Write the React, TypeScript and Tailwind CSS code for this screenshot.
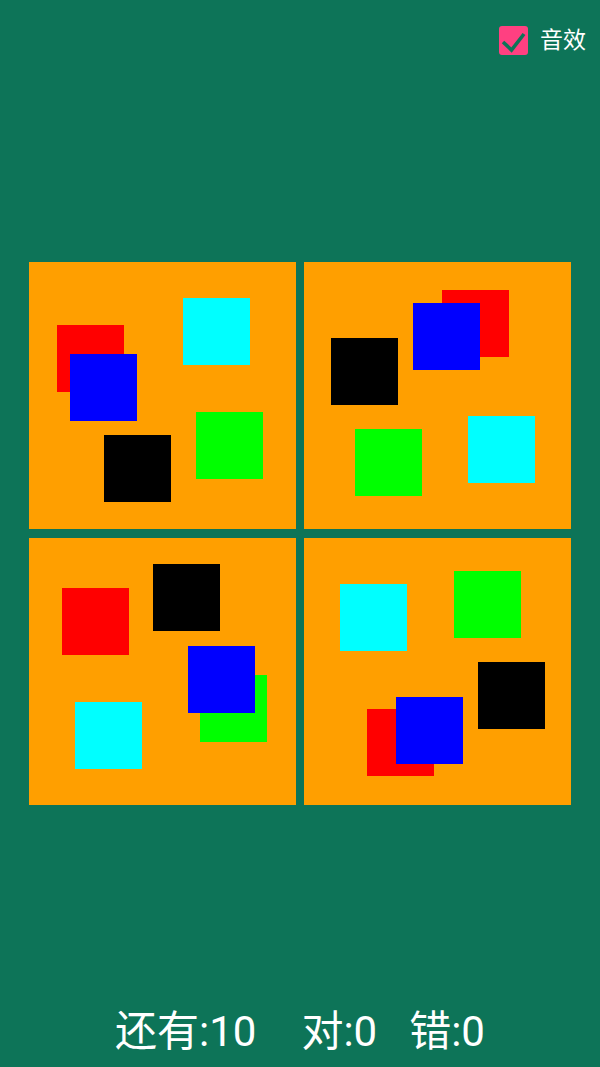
const squares: Record<string, string> = {
  red: "bg-[#ff0000]",
  blue: "bg-[#0000ff]",
  cyan: "bg-[#00ffff]",
  green: "bg-[#00ff00]",
  black: "bg-black",
};

type Sq = { c: string; x: number; y: number };

// positions in each 267px card, drawn in order (later on top)
const cards: Sq[][] = [
  [
    { c: "red", x: 28, y: 63 },
    { c: "blue", x: 41, y: 92 },
    { c: "cyan", x: 154, y: 36 },
    { c: "green", x: 167, y: 150 },
    { c: "black", x: 75, y: 173 },
  ],
  [
    { c: "red", x: 138, y: 28 },
    { c: "blue", x: 109, y: 41 },
    { c: "black", x: 27, y: 76 },
    { c: "green", x: 51, y: 167 },
    { c: "cyan", x: 164, y: 154 },
  ],
  [
    { c: "red", x: 33, y: 50 },
    { c: "black", x: 124, y: 26 },
    { c: "green", x: 171, y: 137 },
    { c: "blue", x: 159, y: 108 },
    { c: "cyan", x: 46, y: 164 },
  ],
  [
    { c: "cyan", x: 36, y: 46 },
    { c: "green", x: 150, y: 33 },
    { c: "black", x: 174, y: 124 },
    { c: "red", x: 63, y: 171 },
    { c: "blue", x: 92, y: 159 },
  ],
];

function Card({ items }: { items: Sq[] }) {
  return (
    <div className="relative w-[267px] h-[267px] bg-[#ff9f00]">
      {items.map((s, i) => (
        <div
          key={i}
          className={`absolute w-[67px] h-[67px] ${squares[s.c]}`}
          style={{ left: s.x, top: s.y }}
        />
      ))}
    </div>
  );
}

export default function App() {
  return (
    <div
      className="flex flex-col w-[600px] h-[1067px] bg-[#0d7458] text-white"
      style={{ fontFamily: '"Roboto", "Noto Sans CJK SC", sans-serif' }}
    >
      <div className="flex items-center justify-end h-[80px] pr-[14px]">
        <label className="flex items-center gap-[12px]">
          <span className="flex items-center justify-center w-[29px] h-[29px] rounded-[3px] bg-[#ff4081]">
            <svg width="29" height="29" viewBox="0 0 29 29">
              <path d="M4 16 L12.5 24 L25 8" fill="none" stroke="#0d7458" strokeWidth="3.6" />
            </svg>
          </span>
          <span className="text-[23px] leading-none">音效</span>
        </label>
      </div>

      <div className="grid grid-cols-2 gap-x-[8px] gap-y-[9px] w-[542px] mx-auto mt-[182px]">
        {cards.map((items, i) => (
          <Card key={i} items={items} />
        ))}
      </div>

      <div className="flex-1" />

      <div className="flex justify-center items-center h-[74px] pt-[4px] text-[42px] leading-none">
        <span>还有:10</span>
        <span className="ml-[45px]">对:0</span>
        <span className="ml-[32px]">错:0</span>
      </div>
    </div>
  );
}
